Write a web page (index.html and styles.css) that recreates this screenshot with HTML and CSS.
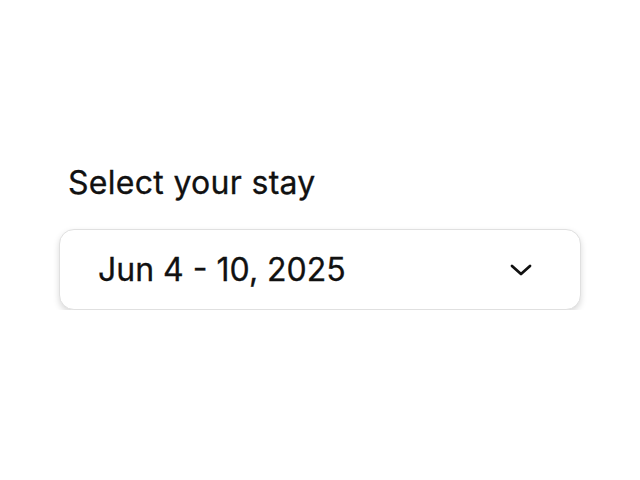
FILE: index.html
```html
<!DOCTYPE html>
<html lang="en">
<head>
    <meta charset="UTF-8">
    <meta name="viewport" content="width=device-width, initial-scale=1.0">
    <title>Select your stay</title>
    <link rel="stylesheet" href="styles.css">
</head>
<body>
    <div class="stay-picker">
        <label class="stay-label" for="stayDates">Select your stay</label>
        <button class="stay-select" id="stayDates" type="button">
            <span class="stay-value">Jun 4 - 10, 2025</span>
            <svg class="chevron" width="22" height="12" viewBox="0 0 22 12" aria-hidden="true">
                <path d="M2 2 L11 10 L20 2" fill="none" stroke="#111" stroke-width="2.8" stroke-linecap="round" stroke-linejoin="round"/>
            </svg>
        </button>
    </div>
</body>
</html>
```

FILE: styles.css
```css
body {
    margin: 0;
    background: #fff;
    font-family: Inter, 'Noto Sans', 'Liberation Sans', sans-serif;
    color: #111;
}

.stay-picker {
    display: flex;
    flex-direction: column;
    padding: 164px 59px 0 59px;
}

.stay-label {
    font-size: 32px;
    line-height: 38px;
    letter-spacing: 0.3px;
    padding-left: 9px;
    margin-bottom: 27px;
    -webkit-text-stroke: 0.3px #111;
}

.stay-select {
    display: flex;
    align-items: center;
    justify-content: space-between;
    width: 522px;
    height: 81px;
    box-sizing: border-box;
    padding: 0 48px 0 38px;
    background: #fff;
    border: 1.5px solid #e0e0e0;
    border-radius: 15px;
    box-shadow: 0 3px 6px rgba(0,0,0,0.15);
    font-family: inherit;
    color: #111;
    cursor: pointer;
}

.stay-value {
    font-size: 32px;
    -webkit-text-stroke: 0.3px #111;
}

.chevron {
    display: block;
}
```
